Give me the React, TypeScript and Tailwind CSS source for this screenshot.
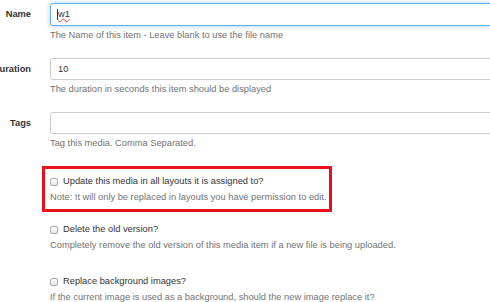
export default function App() {
  const font = { fontFamily: '"Liberation Sans", Arial, sans-serif' };
  return (
    <div className="w-[490px] h-[302px] bg-white overflow-hidden text-[9.3px] leading-[13px] text-[#333]" style={font}>
      <div className="pt-[3px]">
        {/* Name */}
        <div className="flex">
          <div className="w-[31px] shrink-0 flex justify-end items-center h-[23px] font-bold whitespace-nowrap">Name</div>
          <div className="ml-[19px] flex-1 min-w-0">
            <div className="w-[460px] h-[23px] rounded-[3px] border border-[#66afe9] shadow-[0_0_5px_rgba(102,175,233,0.6)] flex items-center pl-[6px]">
              <span className="w-px h-[11px] bg-[#333]"></span>
              <span className="underline decoration-wavy decoration-[#e33] decoration-[1px]">w1</span>
            </div>
            <p className="mt-[3px] text-[#737373]">The Name of this item - Leave blank to use the file name</p>
          </div>
        </div>

        {/* Duration */}
        <div className="flex mt-[16px]">
          <div className="w-[31px] shrink-0 flex justify-end items-center h-[22px] font-bold whitespace-nowrap">Duration</div>
          <div className="ml-[19px] flex-1 min-w-0">
            <div className="w-[460px] h-[22px] rounded-[3px] border border-[#ccc] flex items-center pl-[7px]">10</div>
            <p className="mt-[3px] text-[#737373]">The duration in seconds this item should be displayed</p>
          </div>
        </div>

        {/* Tags */}
        <div className="flex mt-[16px]">
          <div className="w-[31px] shrink-0 flex justify-end items-center h-[22px] font-bold whitespace-nowrap">Tags</div>
          <div className="ml-[19px] flex-1 min-w-0">
            <div className="w-[460px] h-[22px] rounded-[3px] border border-[#ccc]"></div>
            <p className="mt-[3px] text-[#737373]">Tag this media. Comma Separated.</p>
          </div>
        </div>

        {/* Update (highlighted) */}
        <div className="ml-[42px] mt-[16px] w-[290px] h-[46px] border-[3px] border-[#e8101d] pl-[5px] pt-[6px]">
          <label className="flex items-center">
            <span className="w-[8px] h-[8px] rounded-[2px] border border-[#a9a9a9] bg-gradient-to-b from-white to-[#e6e6e6]"></span>
            <span className="ml-[5px]">Update this media in all layouts it is assigned to?</span>
          </label>
          <p className="mt-[3px] text-[#737373]">Note: It will only be replaced in layouts you have permission to edit.</p>
        </div>

        {/* Delete */}
        <div className="ml-[50px] mt-[11px]">
          <label className="flex items-center">
            <span className="w-[8px] h-[8px] rounded-[2px] border border-[#a9a9a9] bg-gradient-to-b from-white to-[#e6e6e6]"></span>
            <span className="ml-[5px]">Delete the old version?</span>
          </label>
          <p className="mt-[3px] text-[#737373]">Completely remove the old version of this media item if a new file is being uploaded.</p>
        </div>

        {/* Replace */}
        <div className="ml-[50px] mt-[23px]">
          <label className="flex items-center">
            <span className="w-[8px] h-[8px] rounded-[2px] border border-[#a9a9a9] bg-gradient-to-b from-white to-[#e6e6e6]"></span>
            <span className="ml-[5px]">Replace background images?</span>
          </label>
          <p className="mt-[3px] text-[#737373]">If the current image is used as a background, should the new image replace it?</p>
        </div>
      </div>
    </div>
  );
}
